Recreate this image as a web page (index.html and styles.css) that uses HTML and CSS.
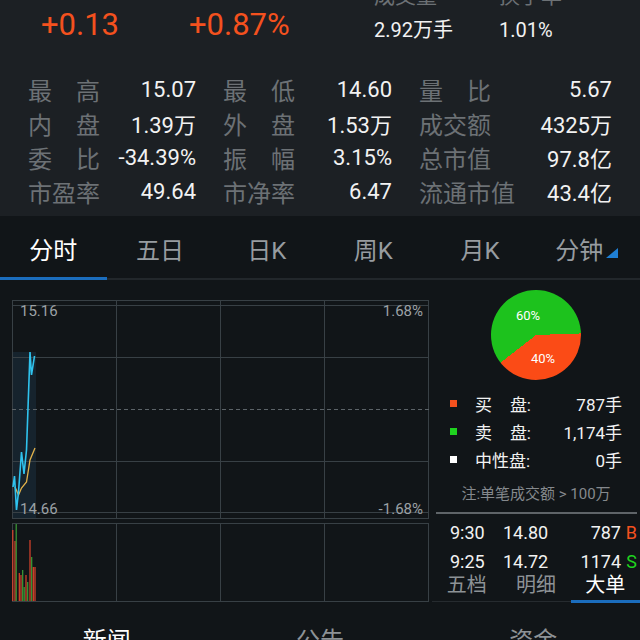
FILE: index.html
```html
<!DOCTYPE html>
<html lang="zh-CN">
<head>
    <meta charset="UTF-8">
    <meta name="viewport" content="width=device-width, initial-scale=1.0">
    <title>分时</title>
    <link rel="stylesheet" href="styles.css">
</head>
<body>
    <div class="summary">
        <div class="quote">
            <div class="change">+0.13</div>
            <div class="change pct">+0.87%</div>
            <div class="qitem vol">
                <span class="qlabel">成交量</span>
                <span class="qvalue">2.92万手</span>
            </div>
            <div class="qitem">
                <span class="qlabel">换手率</span>
                <span class="qvalue">1.01%</span>
            </div>
        </div>

        <div class="stats">
            <div class="stat"><span class="lbl">最高</span><span class="val">15.07</span></div>
            <div class="stat"><span class="lbl">最低</span><span class="val">14.60</span></div>
            <div class="stat"><span class="lbl">量比</span><span class="val">5.67</span></div>
            <div class="stat"><span class="lbl">内盘</span><span class="val">1.39万</span></div>
            <div class="stat"><span class="lbl">外盘</span><span class="val">1.53万</span></div>
            <div class="stat"><span class="lbl">成交额</span><span class="val">4325万</span></div>
            <div class="stat"><span class="lbl">委比</span><span class="val">-34.39%</span></div>
            <div class="stat"><span class="lbl">振幅</span><span class="val">3.15%</span></div>
            <div class="stat"><span class="lbl">总市值</span><span class="val">97.8亿</span></div>
            <div class="stat"><span class="lbl">市盈率</span><span class="val">49.64</span></div>
            <div class="stat"><span class="lbl">市净率</span><span class="val">6.47</span></div>
            <div class="stat"><span class="lbl">流通市值</span><span class="val">43.4亿</span></div>
        </div>
    </div>

    <nav class="tabs">
        <div class="tab active">分时</div>
        <div class="tab">五日</div>
        <div class="tab">日K</div>
        <div class="tab">周K</div>
        <div class="tab">月K</div>
        <div class="tab">分钟<span class="corner"></span></div>
    </nav>

    <main class="main">
        <div class="chart">
            <svg width="417" height="302" viewBox="0 0 417 302">
                <!-- 价格区 -->
                <rect x="0" y="52" width="24" height="166" fill="#16232d"/>
                <g stroke="#384045" stroke-width="1" fill="none">
                    <rect x="0.5" y="0.5" width="416" height="218"/>
                    <line x1="0" y1="5.5" x2="417" y2="5.5"/>
                    <line x1="0" y1="57.5" x2="417" y2="57.5"/>
                    <line x1="0" y1="161.5" x2="417" y2="161.5"/>
                    <line x1="0" y1="212.5" x2="417" y2="212.5"/>
                    <line x1="104.5" y1="0" x2="104.5" y2="218"/>
                    <line x1="208.5" y1="0" x2="208.5" y2="218"/>
                    <line x1="312.5" y1="0" x2="312.5" y2="218"/>
                    <!-- 成交量区 -->
                    <rect x="0.5" y="223.5" width="416" height="78"/>
                    <line x1="104.5" y1="223" x2="104.5" y2="302"/>
                    <line x1="208.5" y1="223" x2="208.5" y2="302"/>
                    <line x1="312.5" y1="223" x2="312.5" y2="302"/>
                </g>
                <line x1="0" y1="109.5" x2="417" y2="109.5" stroke="#5c6368" stroke-dasharray="4 3"/>

                <polyline points="3,187 6.5,195 9.5,188 14.5,182 18,160 23,148" fill="none" stroke="#e2b24a" stroke-width="1.3"/>
                <polyline points="1,187 2.5,176 4.5,210 6.5,192 9.5,152 12,174 14.5,150 16,108 18,52 19.5,75 22.5,56" fill="none" stroke="#2fc3ee" stroke-width="1.6"/>

                <g class="axis">
                    <text x="8" y="16">15.16</text>
                    <text x="411" y="16" text-anchor="end">1.68%</text>
                    <text x="8" y="214">14.66</text>
                    <text x="411" y="214" text-anchor="end">-1.68%</text>
                </g>

                <g stroke-width="1.2">
                    <line x1="0.8" y1="301" x2="0.8" y2="230" stroke="#e0442c"/>
                    <line x1="3" y1="301" x2="3" y2="241" stroke="#e0442c"/>
                    <line x1="4.2" y1="301" x2="4.2" y2="224" stroke="#3c9f38"/>
                    <line x1="7.3" y1="301" x2="7.3" y2="273" stroke="#e0442c"/>
                    <line x1="9" y1="301" x2="9" y2="275" stroke="#e0442c"/>
                    <line x1="10.7" y1="301" x2="10.7" y2="270" stroke="#3c9f38"/>
                    <line x1="12.2" y1="301" x2="12.2" y2="287" stroke="#3c9f38"/>
                    <line x1="14" y1="301" x2="14" y2="275" stroke="#e0442c"/>
                    <line x1="15.7" y1="301" x2="15.7" y2="282" stroke="#3c9f38"/>
                    <line x1="18" y1="301" x2="18" y2="240" stroke="#e0442c"/>
                    <line x1="19.7" y1="301" x2="19.7" y2="257" stroke="#3c9f38"/>
                    <line x1="21.3" y1="301" x2="21.3" y2="267" stroke="#e0442c"/>
                    <line x1="23" y1="301" x2="23" y2="267" stroke="#e0442c"/>
                </g>
            </svg>
        </div>

        <aside class="side">
            <div class="pie">
                <span class="pie-label sell">60%</span>
                <span class="pie-label buy">40%</span>
            </div>

            <div class="legend">
                <div class="legend-row">
                    <span class="dot red"></span>
                    <span class="key"><span>买</span><span>盘:</span></span>
                    <span class="amount">787手</span>
                </div>
                <div class="legend-row">
                    <span class="dot green"></span>
                    <span class="key"><span>卖</span><span>盘:</span></span>
                    <span class="amount">1,174手</span>
                </div>
                <div class="legend-row">
                    <span class="dot white"></span>
                    <span class="key">中性盘:</span>
                    <span class="amount">0手</span>
                </div>
            </div>

            <p class="note">注:单笔成交额 &gt; 100万</p>

            <div class="deals">
                <div class="deal"><span>9:30</span><span>14.80</span><span class="qty">787</span><span class="side-b">B</span></div>
                <div class="deal"><span>9:25</span><span>14.72</span><span class="qty">1174</span><span class="side-s">S</span></div>
            </div>

            <div class="subtabs">
                <div class="subtab">五档</div>
                <div class="subtab">明细</div>
                <div class="subtab active">大单</div>
            </div>
        </aside>
    </main>

    <nav class="news">
        <div class="news-tab active">新闻</div>
        <div class="news-tab">公告</div>
        <div class="news-tab">资金</div>
    </nav>
</body>
</html>
```

FILE: styles.css
```css
* {
    margin: 0;
    padding: 0;
    box-sizing: border-box;
}

body {
    font-family: Roboto, "Noto Sans CJK SC", sans-serif;
    background: #111518;
    color: #f2f2f2;
    width: 640px;
    height: 640px;
    overflow: hidden;
}

/* 顶部行情 */
.summary {
    background: #1c2024;
    height: 216px;
    overflow: hidden;
}

.quote {
    display: flex;
    margin-top: -16px;
    padding-left: 41px;
}

.change {
    width: 148px;
    padding-top: 23px;
    font-size: 31px;
    line-height: 36px;
    color: #f4511e;
}

.change.pct {
    width: 185px;
}

.qitem {
    display: flex;
    flex-direction: column;
}

.qitem.vol {
    width: 125px;
}

.qlabel {
    font-size: 21px;
    line-height: 24px;
    color: #6c7175;
}

.qvalue {
    margin-top: 10px;
    font-size: 20px;
    line-height: 24px;
}

.stats {
    display: grid;
    grid-template-columns: 168px 169px 193px;
    column-gap: 27px;
    margin-top: 29px;
    padding-left: 28px;
}

.stat {
    display: flex;
    justify-content: space-between;
    align-items: center;
    height: 34px;
}

.lbl {
    min-width: 72px;
    font-size: 24px;
    color: #6c7175;
    text-align: justify;
    text-align-last: justify;
}

.val {
    font-size: 22px;
}

/* 周期切换 */
.tabs {
    display: flex;
    height: 64px;
    border-bottom: 2px solid #22272b;
}

.tab {
    flex: 1;
    height: 64px;
    display: flex;
    align-items: center;
    justify-content: center;
    font-size: 24px;
    color: #979ca0;
}

.tab.active {
    color: #fff;
    box-shadow: inset 0 -3px 0 #1b6dbd;
}

.corner {
    width: 0;
    height: 0;
    margin: 10px 0 0 3px;
    border-left: 12px solid transparent;
    border-bottom: 10px solid #1f7fd4;
}

/* 分时图 */
.main {
    display: flex;
    height: 322px;
}

.chart {
    margin-left: 12px;
    padding-top: 20px;
}

.chart svg {
    display: block;
}

.axis text {
    font-family: Roboto, sans-serif;
    font-size: 15px;
    fill: #9ca1a5;
}

.side {
    width: 208px;
    margin-left: auto;
}

.pie {
    position: relative;
    width: 90px;
    height: 90px;
    margin: 10px auto 0;
    border-radius: 50%;
    background: conic-gradient(#1dc21d 0 88deg, #fb4b16 88deg 232deg, #1dc21d 232deg);
}

.pie-label {
    position: absolute;
    transform: translate(-50%, -50%);
    font-size: 13px;
    color: #fff;
}

.pie-label.sell {
    left: 37px;
    top: 25px;
}

.pie-label.buy {
    left: 52px;
    top: 68px;
}

.legend {
    margin-top: 9px;
    padding: 0 18px;
}

.legend-row {
    display: flex;
    align-items: center;
    height: 28px;
    font-size: 17px;
    white-space: nowrap;
}

.dot {
    flex-shrink: 0;
    width: 7px;
    height: 7px;
    margin-right: 18px;
}

.dot.red { background: #f4511e; }
.dot.green { background: #1fd31f; }
.dot.white { background: #fff; }

.key {
    display: flex;
    flex-shrink: 0;
    justify-content: space-between;
    width: 56px;
}

.amount {
    flex: 1;
    text-align: right;
}

.note {
    margin-top: 10px;
    font-size: 15px;
    line-height: 22px;
    text-align: center;
    color: #85898d;
}

.deals {
    margin: 7px 3px 0 4px;
    padding-left: 14px;
    border-top: 2px solid #5f6468;
    padding-top: 4px;
}

.deal {
    display: grid;
    grid-template-columns: 53px 60px 1fr 16px;
    height: 29px;
    align-items: center;
    font-size: 18px;
}

.qty {
    text-align: right;
}

.side-b,
.side-s {
    text-align: right;
}

.side-b { color: #f4511e; }
.side-s { color: #1fd31f; }

.subtabs {
    display: flex;
    height: 26px;
    border-bottom: 1px solid #262b2f;
}

.subtab {
    flex: 1;
    height: 27px;
    font-size: 20px;
    line-height: 18px;
    text-align: center;
    color: #8d9296;
}

.subtab.active {
    color: #fff;
    box-shadow: inset 0 -3px 0 #1b6dbd;
}

/* 资讯 */
.news {
    display: flex;
    padding-top: 23px;
}

.news-tab {
    flex: 1;
    font-size: 24px;
    line-height: 32px;
    text-align: center;
    color: #8d9296;
}

.news-tab.active {
    color: #fff;
}
```
